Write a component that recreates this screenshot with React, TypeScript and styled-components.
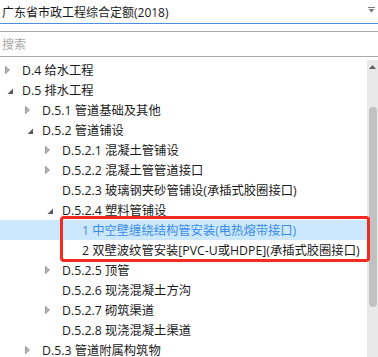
import React from 'react';
import styled, { createGlobalStyle } from 'styled-components';

const Global = createGlobalStyle`
  html, body { margin:0; padding:0; background:#fff; }
  body { font-family: "Open Sans", "Noto Sans CJK SC", sans-serif; font-size:12px; color:#1a1a1a; }
`;

const Page = styled.div`width:378px;height:357px;display:flex;flex-direction:column;overflow:hidden;`;

const Header = styled.div`
  height:23px;border-bottom:1px solid #4a8fe6;display:flex;align-items:center;justify-content:space-between;
  padding:0 3px 0 2px;box-sizing:content-box;
`;
const HeaderTitle = styled.span`font-size:12px;line-height:23px;color:#1a1a1a;padding-top:2px;`;

const SearchBox = styled.div`
  margin-top:7px;height:24px;border-top:1px solid #a9a9a9;border-bottom:1px solid #a9a9a9;
  display:flex;align-items:center;padding-left:2px;color:#a8a8a8;font-size:12px;
`;

const TreeArea = styled.div`margin-top:3px;flex:1;display:flex;min-height:0;`;
const List = styled.div`flex:1;display:flex;flex-direction:column;`;

const Row = styled.div<{ $level:number; $selected?:boolean }>`
  height:20px;display:flex;align-items:center;flex-shrink:0;font-size:12.3px;
  padding-left:${p => 2 + p.$level * 20}px;
  background:${p => p.$selected ? '#cce8ff' : 'transparent'};
  color:${p => p.$selected ? '#3a8ce4' : '#1a1a1a'};
  white-space:nowrap;
`;
const ArrowBox = styled.span`width:18px;padding-left:3px;box-sizing:border-box;display:flex;align-items:center;margin-right:2px;`;

const Group = styled.div`position:relative;display:flex;flex-direction:column;`;
const Mark = styled.div`
  position:absolute;left:60px;right:-3px;top:-4px;bottom:-2px;
  border:3px solid #f32a22;border-radius:4px;pointer-events:none;z-index:2;
`;

const ScrollBar = styled.div`width:11px;background:#e9e9e9;position:relative;display:flex;flex-direction:column;align-items:center;`;
const ScrollUp = styled.div`height:9px;display:flex;align-items:flex-end;justify-content:center;width:100%;`;
const Thumb = styled.div`margin-top:38px;width:8px;height:200px;border-radius:4px;background:#c1c1c1;margin-left:1px;`;

type Node = { label:string; level:number; state?:'open'|'closed' };

const top: Node[] = [
  { label:'D.4 给水工程', level:0, state:'closed' },
  { label:'D.5 排水工程', level:0, state:'open' },
  { label:'D.5.1 管道基础及其他', level:1, state:'closed' },
  { label:'D.5.2 管道铺设', level:1, state:'open' },
  { label:'D.5.2.1 混凝土管铺设', level:2, state:'closed' },
  { label:'D.5.2.2 混凝土管管道接口', level:2, state:'closed' },
  { label:'D.5.2.3 玻璃钢夹砂管铺设(承插式胶圈接口)', level:2 },
  { label:'D.5.2.4 塑料管铺设', level:2, state:'open' },
];
const bottom: Node[] = [
  { label:'D.5.2.5 顶管', level:2, state:'closed' },
  { label:'D.5.2.6 现浇混凝土方沟', level:2 },
  { label:'D.5.2.7 砌筑渠道', level:2, state:'closed' },
  { label:'D.5.2.8 现浇混凝土渠道', level:2 },
  { label:'D.5.3 管道附属构筑物', level:1, state:'closed' },
];

function Arrow({ state }: { state?:'open'|'closed' }) {
  if (state === 'closed') return (
    <svg width="5" height="8" viewBox="0 0 5 8"><polygon points="0.5,0.5 4.5,4 0.5,7.5" fill="#b4b4b4" stroke="#8c8c8c" strokeWidth="0.8" /></svg>
  );
  if (state === 'open') return (
    <svg width="7" height="7" viewBox="0 0 7 7" style={{ marginLeft: 2, marginTop: 2 }}><polygon points="6,0.5 6,6 0.5,6" fill="#5a5a5a" /></svg>
  );
  return null;
}

function TreeRow({ n }: { n:Node }) {
  return (
    <Row $level={n.level}>
      <ArrowBox><Arrow state={n.state} /></ArrowBox>
      {n.label}
    </Row>
  );
}

export default function App() {
  return (
    <Page>
      <Global />
      <Header>
        <HeaderTitle>广东省市政工程综合定额(2018)</HeaderTitle>
        <svg width="7" height="6" viewBox="0 0 7 6" style={{ marginBottom: 4 }}>
          <rect x="0" y="0" width="7" height="1" fill="#7a7a7a" />
          <polygon points="0.5,2 6.5,2 3.5,5.5" fill="#7a7a7a" />
        </svg>
      </Header>
      <SearchBox>搜索</SearchBox>
      <TreeArea>
        <List>
          {top.map(n => <TreeRow key={n.label} n={n} />)}
          <Group>
            <Row $level={3} $selected>
              <ArrowBox />
              1 中空壁缠绕结构管安装(电热熔带接口)
            </Row>
            <Row $level={3}>
              <ArrowBox />
              2 双壁波纹管安装[PVC-U或HDPE](承插式胶圈接口)
            </Row>
            <Mark />
          </Group>
          {bottom.map(n => <TreeRow key={n.label} n={n} />)}
        </List>
        <ScrollBar>
          <ScrollUp>
            <svg width="7" height="4" viewBox="0 0 7 4"><polygon points="3.5,0 7,4 0,4" fill="#606060" /></svg>
          </ScrollUp>
          <Thumb />
        </ScrollBar>
      </TreeArea>
    </Page>
  );
}
